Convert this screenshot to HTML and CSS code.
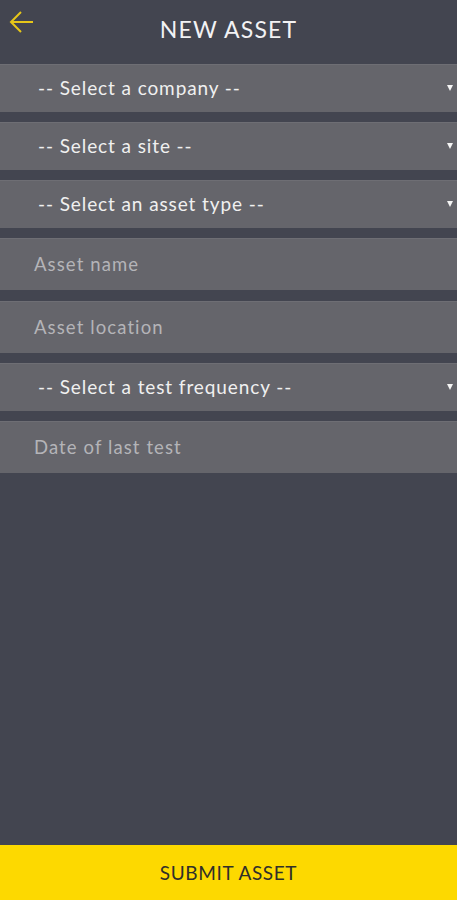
FILE: index.html
```html
<!DOCTYPE html>
<html>
<head>
<meta charset="utf-8">
<link rel="stylesheet" href="styles.css">
</head>
<body>
<div class="app">
  <header class="topbar">
    <svg class="back" width="26" height="24" viewBox="0 0 26 24"><path d="M24 12H3M12 2L2 12l10 10" fill="none" stroke="#e6c619" stroke-width="2"/></svg>
    <h1 class="title">NEW ASSET</h1>
  </header>
  <main class="form">
    <div class="field select"><span>-- Select a company --</span><i class="caret"></i></div>
    <div class="field select"><span>-- Select a site --</span><i class="caret"></i></div>
    <div class="field select"><span>-- Select an asset type --</span><i class="caret"></i></div>
    <div class="field input"><span>Asset name</span></div>
    <div class="field input"><span>Asset location</span></div>
    <div class="field select"><span>-- Select a test frequency --</span><i class="caret"></i></div>
    <div class="field input"><span>Date of last test</span></div>
  </main>
  <footer class="submit">SUBMIT ASSET</footer>
</div>
</body>
</html>
```
FILE: styles.css
```css
* { box-sizing: border-box; }
html, body { margin: 0; padding: 0; }
body { background: #434550; font-family: Lato, "Open Sans", sans-serif; }
.app { height: 900px; display: flex; flex-direction: column; }
.topbar { height: 64px; position: relative; display: flex; align-items: center; justify-content: center; }
.back { position: absolute; left: 9px; top: 10px; }
.title { margin: 0; font-weight: 400; font-size: 23px; color: #f2f2f4; letter-spacing: 1.2px; padding-bottom: 7px; }
.form { flex: 1; display: flex; flex-direction: column; gap: 10.5px; }
.field { background: #65656b; border-top: 1px solid #6e6e74; display: flex; align-items: center; }
.select { height: 47.5px; padding-left: 38px; color: #f0f0f0; font-size: 19px; letter-spacing: 0.9px; justify-content: space-between; padding-right: 4px; }
.input { height: 52px; padding-left: 34px; color: #b4b4b8; font-size: 18.5px; letter-spacing: 1.1px; }
.field span { margin-top: -1px; }
.caret { width: 0; height: 0; border-left: 3px solid transparent; border-right: 3px solid transparent; border-top: 6px solid #f4f4f4; }
.submit { height: 55px; background: #fdd900; color: #2f2f2a; font-size: 19px; letter-spacing: 0.6px; display: flex; align-items: center; justify-content: center; }
```
